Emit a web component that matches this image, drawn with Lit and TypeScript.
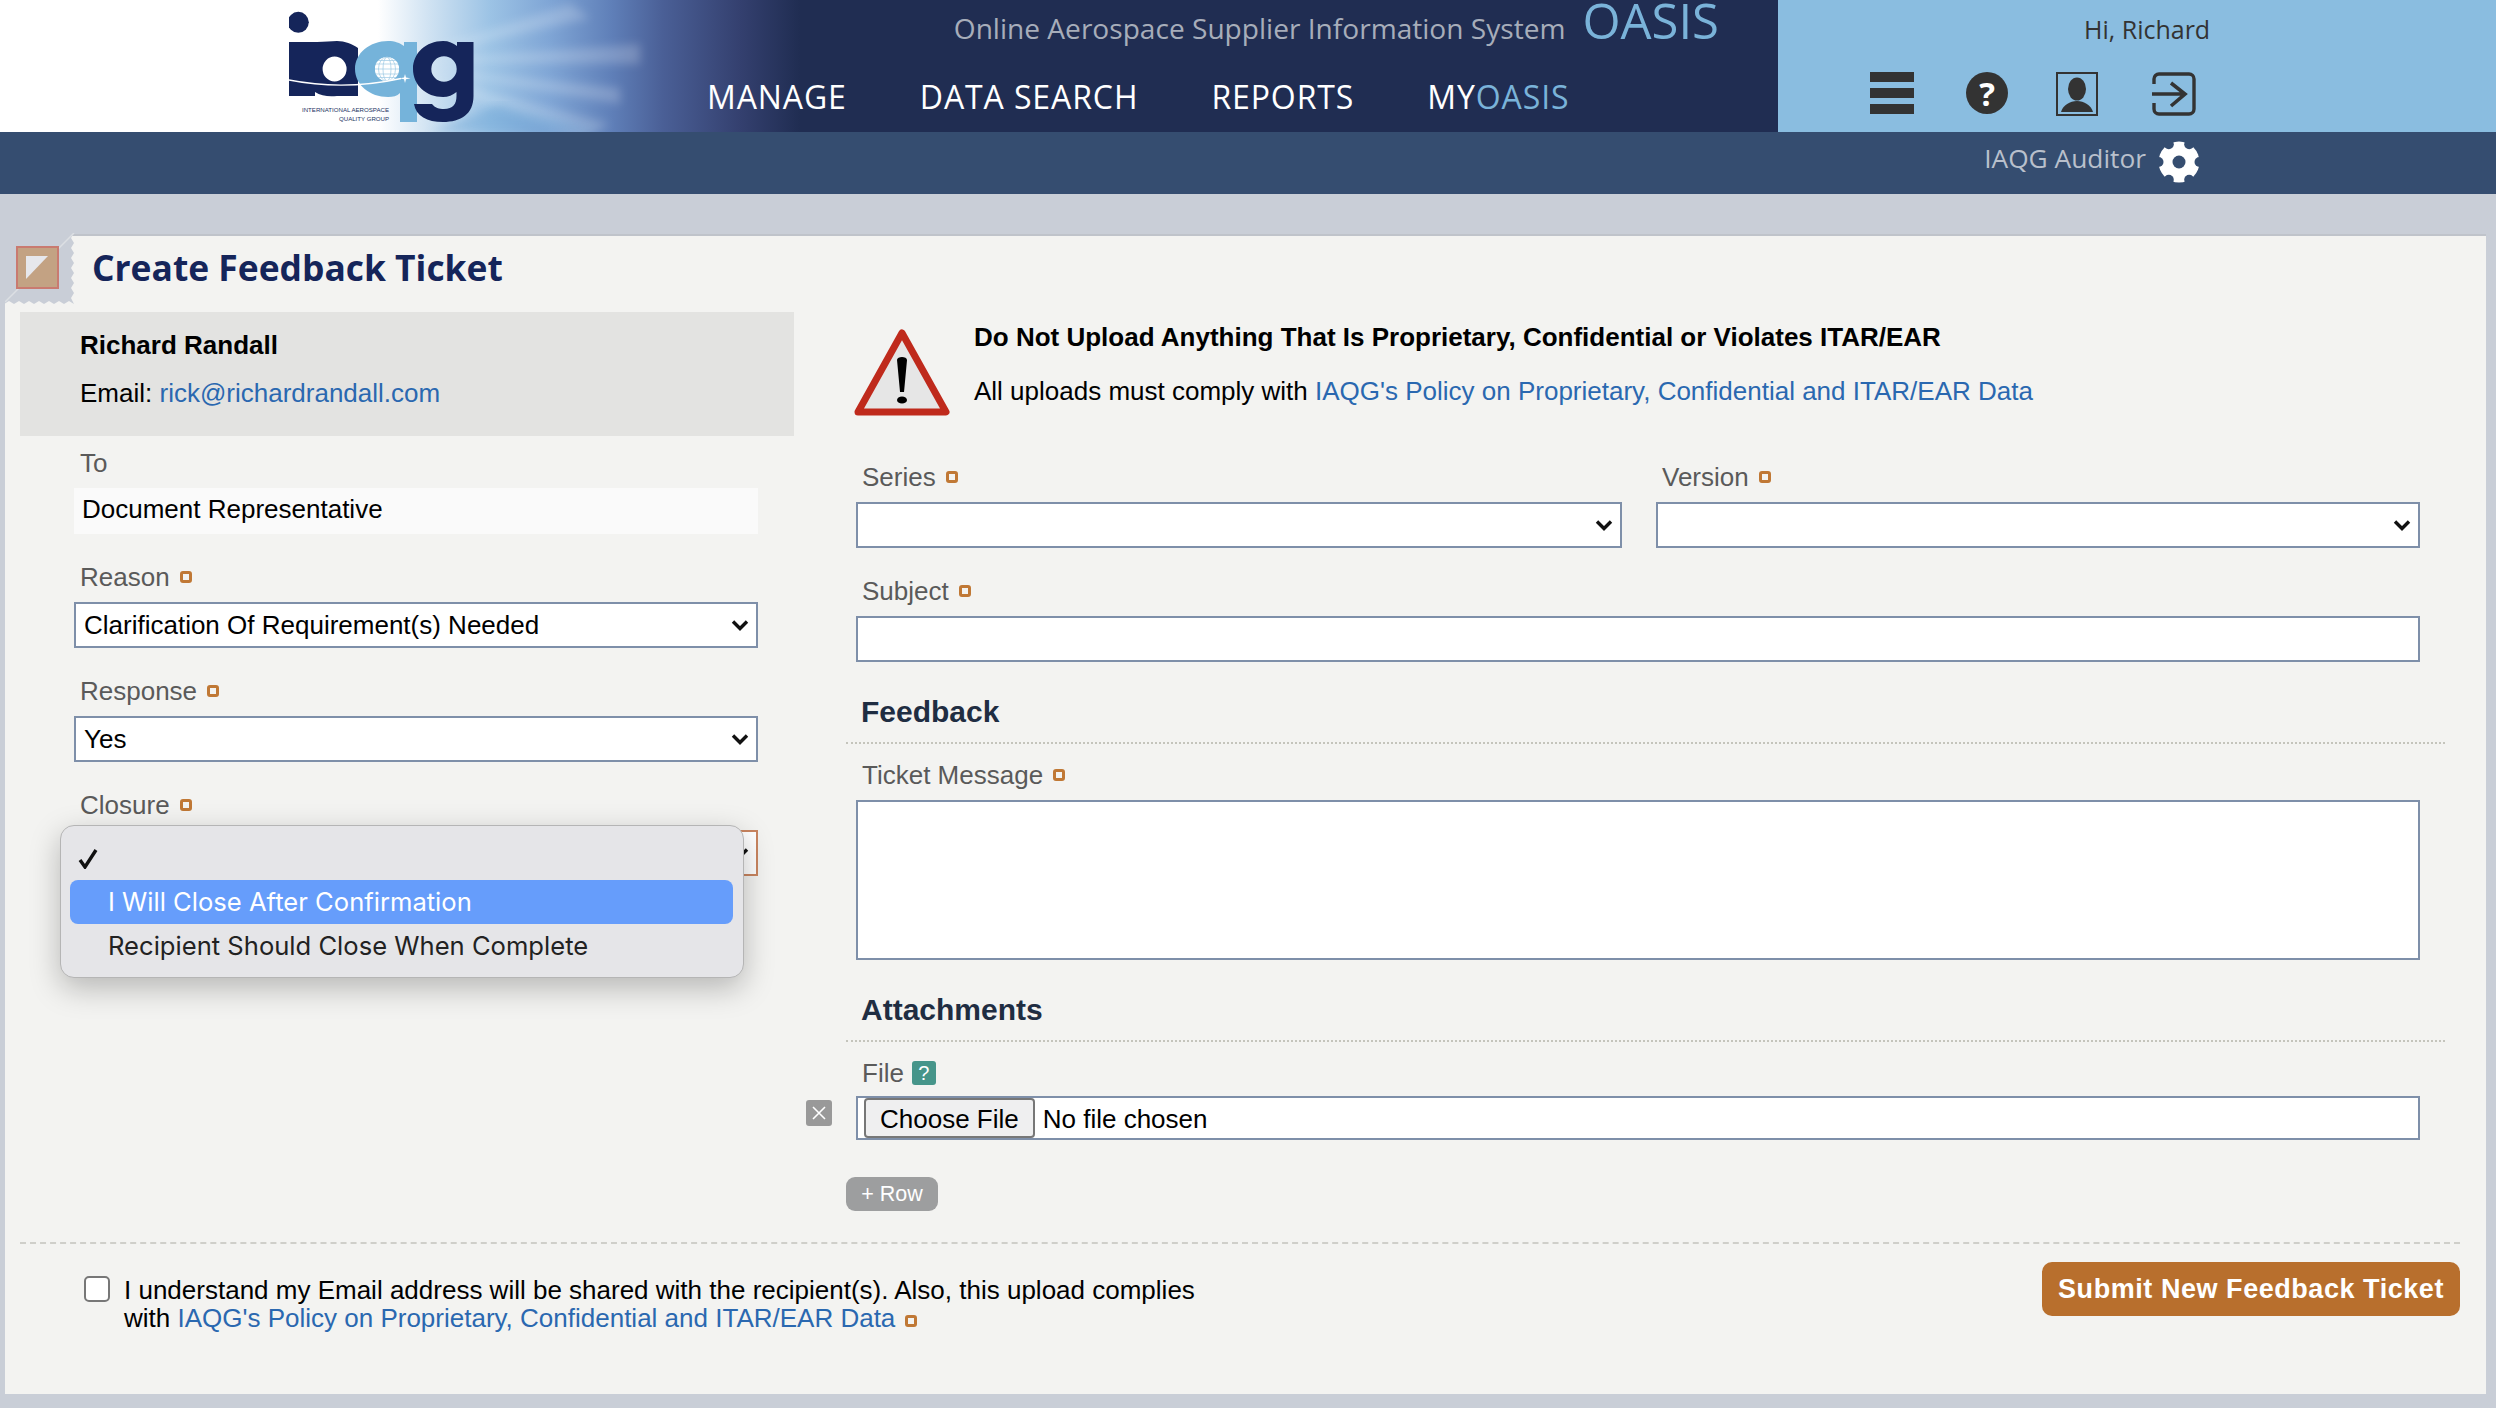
import { LitElement, html, css } from 'lit';
import { customElement } from 'lit/decorators.js';

const chevron = `url("data:image/svg+xml,%3Csvg xmlns='http://www.w3.org/2000/svg' width='18' height='12'%3E%3Cpath d='M2 2.5l7 7 7-7' fill='none' stroke='%23111' stroke-width='3.4'/%3E%3C/svg%3E")`;

const logo = html`
  <svg class="logo" viewBox="0 0 190 132" width="190" height="132">
    <circle cx="9.3" cy="22.3" r="10.5" fill="#15255a"></circle>
    <path fill="#15255a" fill-rule="evenodd" d="M0 42H28C36 42 42 41 48 41C56 41 63 44 69 48V96H48C40 97 32 96 26 92V96H0V84H0V42ZM45.6 56.5A12 12.5 0 1 0 45.6 81.5A12 12.5 0 1 0 45.6 56.5Z"></path>
    <path fill="#75b3da" fill-rule="evenodd" d="M99 41C106 41 111 43 115 46V42H128V122H111V93C108 96 104 97 99 97C81 97 66 85 66 69C66 53 81 41 99 41ZM98 57A12 12 0 1 0 98 81A12 12 0 1 0 98 57Z"></path>
    <circle cx="98" cy="69" r="12" fill="#fff"></circle>
    <g fill="none" stroke="#9cc8e4" stroke-width=".7">
      <ellipse cx="98" cy="69" rx="4" ry="12"></ellipse>
      <ellipse cx="98" cy="69" rx="8.5" ry="12"></ellipse>
      <path d="M86.5 64H109.5M86 69H110M86.5 74H109.5M89 60.5H107M89 77.5H107"></path>
    </g>
    <path fill="#15255a" fill-rule="evenodd" d="M154 41C160 41 164 43 168 46V42H184.5V96C184.5 114 172 122 154 122C138 122 127 116 125 104H143C146 108 150 109 155 109C164 109 167.5 104 167.5 96V92C164 95 159 97 154 97C137 97 124 85 124 69C124 53 137 41 154 41ZM155 56.3A12.7 12.7 0 1 0 155 81.7A12.7 12.7 0 1 0 155 56.3Z"></path>
    <path d="M0 80Q55 91 112 78.5" fill="none" stroke="#fff" stroke-width="1.4"></path>
    <path d="M116 74l1 3.4 4.5.8-4.5 1-1 3.8-1-3.8-4.5-1 4.5-.8z" fill="#fff"></path>
    <text class="cap" x="13" y="112" textLength="87" lengthAdjust="spacingAndGlyphs">INTERNATIONAL AEROSPACE</text>
    <text class="cap" x="50" y="121" textLength="50" lengthAdjust="spacingAndGlyphs">QUALITY GROUP</text>
  </svg>
`;

@customElement('app-root')
export class AppRoot extends LitElement {
  static styles = css`
    :host {
      display: block;
      min-height: 1408px;
      background: #c9ced7;
      font-family: 'Liberation Sans', Arial, sans-serif;
      font-size: 26px;
      color: #000;
    }

    * {
      box-sizing: border-box;
    }

    a {
      color: #2a68b0;
      text-decoration: none;
    }

    .header {
      display: flex;
      height: 132px;
      overflow: hidden;
    }

    .banner {
      position: relative;
      display: flex;
      width: 1778px;
      background: linear-gradient(90deg, #fff 0, #fff 378px, #cfe2f2 430px, #9cc3e5 490px, #7fa5d5 550px, #5f7fb8 612px, #4a5f96 663px, #34406f 740px, #202d52 800px);
    }

    .rays {
      position: absolute;
      left: 370px;
      top: 0;
    }

    .logo {
      position: relative;
      margin-left: 289px;
      flex: none;
    }

    .cap {
      font-size: 6px;
      fill: #23325f;
      font-family: 'Liberation Sans', sans-serif;
    }

    .titles {
      position: relative;
      width: 1013px;
      margin-left: 228px;
      font-family: 'Open Sans', sans-serif;
    }

    .tagline {
      display: flex;
      justify-content: flex-end;
      align-items: baseline;
      gap: 17px;
      height: 41px;
      padding-right: 1px;
      line-height: 41px;
      font-size: 28.1px;
      color: #a7adba;
      white-space: nowrap;
    }

    .oasis {
      font-size: 49px;
      color: #7ab3d9;
    }

    .nav {
      display: flex;
      gap: 73px;
      margin-top: 34px;
      font-size: 32px;
      letter-spacing: 0.9px;
      line-height: 44px;
      color: #fff;
      white-space: nowrap;
    }

    .nav span span {
      color: #7ab3d9;
    }

    .account {
      flex: 1;
      background: #8abde0;
      font-family: 'Open Sans', sans-serif;
      color: #333;
    }

    .hello {
      padding: 12px 0 0 306px;
      font-size: 25px;
      line-height: 34px;
    }

    .icons {
      display: flex;
      align-items: flex-start;
      margin: 26px 0 0 92px;
    }

    .burger {
      display: grid;
      gap: 6px;
      width: 44px;
    }

    .burger i {
      display: block;
      height: 10px;
      background: #333;
    }

    .help {
      display: flex;
      align-items: center;
      justify-content: center;
      width: 42px;
      height: 42px;
      margin-left: 52px;
      border-radius: 50%;
      background: #333;
      color: #fff;
      font-size: 33px;
      font-weight: 700;
    }

    .person {
      margin-left: 48px;
    }

    .exit {
      margin-left: 54px;
    }

    .subbar {
      display: flex;
      justify-content: flex-end;
      align-items: center;
      gap: 12px;
      height: 62px;
      padding: 0 296px 2px 0;
      background: #354d70;
      color: #b9c0cc;
      font-family: 'Open Sans', sans-serif;
      font-size: 26.3px;
    }

    .subbar span {
      margin-top: -8px;
    }

    .card {
      position: relative;
      margin: 40px 10px 0 5px;
      height: 1160px;
      padding: 0 26px 0 15px;
      background: #f3f3f1;
      border-top: 2px solid #bfc3ca;
    }

    .corner {
      position: absolute;
      left: 0;
      top: -3px;
    }

    .title {
      height: 76px;
      margin: 0;
      padding-left: 72px;
      font-family: 'Open Sans', sans-serif;
      font-size: 35.4px;
      font-weight: 700;
      line-height: 63px;
      color: #15255a;
    }

    .main {
      display: grid;
      grid-template-columns: 774px 1599px;
      gap: 52px;
    }

    .who {
      height: 124px;
      padding: 9px 0 0 60px;
      background: #e3e3e1;
      line-height: 48px;
    }

    .who b {
      display: block;
    }

    .left-form {
      padding: 12px 36px 0 54px;
    }

    .field {
      margin-bottom: 28px;
    }

    .label {
      display: flex;
      align-items: center;
      gap: 10px;
      height: 30px;
      margin-bottom: 10px;
      padding-left: 6px;
      color: #5a5a5a;
      line-height: 30px;
    }

    .req {
      display: inline-block;
      flex: none;
      width: 12px;
      height: 12px;
      border: 3px solid #c07835;
      border-radius: 3px;
    }

    .static {
      height: 46px;
      padding-left: 8px;
      background: #fafafa;
      line-height: 43px;
    }

    select,
    input[type='text'],
    textarea,
    input[type='file'] {
      display: block;
      width: 100%;
      height: 46px;
      margin: 0;
      border: 2px solid #7e8fa9;
      border-radius: 0;
      background-color: #fff;
      font: inherit;
      color: #000;
      outline: none;
    }

    select {
      appearance: none;
      padding: 0 30px 0 8px;
      background-repeat: no-repeat;
      background-position: right 7px center;
    }

    .closure {
      position: relative;
    }

    .closure select {
      border-color: #c98560;
    }

    .menu {
      position: absolute;
      left: -14px;
      top: -5px;
      width: 684px;
      height: 153px;
      padding: 10px 10px 10px 9px;
      border: 1px solid #b5b5b5;
      border-radius: 14px;
      background: #e5e5e8;
      box-shadow: 0 10px 30px rgba(0, 0, 0, 0.25);
      font-family: Inter, sans-serif;
      font-size: 25.6px;
      color: #222;
    }

    .item {
      position: relative;
      height: 44px;
      padding-left: 38px;
      line-height: 44px;
      border-radius: 8px;
    }

    .item.on {
      background: #669dfb;
      color: #fff;
    }

    .tick {
      position: absolute;
      left: 8px;
      top: 13px;
    }

    .right {
      padding-left: 10px;
    }

    .warning {
      display: flex;
      height: 150px;
      padding-top: 9px;
    }

    .warning svg {
      flex: none;
      margin: 8px 24px 0 -2px;
    }

    .warning b {
      display: block;
      line-height: 32px;
    }

    .warning p {
      margin: 21px 0 0;
      line-height: 34px;
    }

    .pair {
      display: grid;
      grid-template-columns: 766px 764px;
      gap: 34px;
      width: 1564px;
    }

    .right .field {
      width: 1564px;
      margin-bottom: 28px;
    }

    .right .pair .field {
      width: auto;
    }

    .section {
      margin: 0 0 16px -10px;
      padding: 4px 0 12px 15px;
      border-bottom: 2px dotted #c4c4bc;
      font-size: 30px;
      font-weight: 700;
      line-height: 36px;
      color: #1f2d42;
    }

    .message textarea {
      height: 160px;
      resize: none;
    }

    .file-row {
      position: relative;
      width: 1564px;
      margin-bottom: 37px;
    }

    .file-label {
      margin-bottom: 8px;
      gap: 8px;
    }

    .hint {
      display: flex;
      align-items: center;
      justify-content: center;
      width: 24px;
      height: 24px;
      border-radius: 3px;
      background: #46958a;
      color: #fff;
      font-size: 20px;
    }

    .remove {
      position: absolute;
      left: -50px;
      top: 42px;
      display: flex;
      align-items: center;
      justify-content: center;
      width: 26px;
      height: 26px;
      border-radius: 3px;
      background: #999;
    }

    input[type='file'] {
      height: 44px;
      padding: 0 0 0 6px;
      line-height: 38px;
    }

    input[type='file']::file-selector-button {
      height: 40px;
      margin: 0 8px 0 0;
      padding: 0 14px;
      border: 2px solid #777;
      border-radius: 4px;
      background: #efeff0;
      font: inherit;
      color: #000;
    }

    .add {
      display: block;
      width: 92px;
      height: 34px;
      margin-left: -10px;
      padding: 0;
      border: 0;
      border-radius: 9px;
      background: #9d9e9f;
      color: #fff;
      font: inherit;
      font-size: 21.5px;
    }

    .footer {
      display: flex;
      justify-content: space-between;
      align-items: flex-start;
      margin-top: 31px;
      padding-top: 18px;
      border-top: 2px dashed #cfcfca;
    }

    .agree {
      display: flex;
      margin: 14px 0 0 64px;
      width: 1120px;
      line-height: 28px;
    }

    .check {
      flex: none;
      width: 26px;
      height: 26px;
      margin-right: 14px;
      border: 2px solid #777;
      border-radius: 5px;
      background: #fff;
    }

    .agree .req {
      margin-left: 10px;
    }

    .submit {
      width: 418px;
      height: 54px;
      padding: 0;
      border: 0;
      border-radius: 10px;
      background: #b86f2d;
      color: #fff;
      font: inherit;
      font-size: 27px;
      font-weight: 700;
      letter-spacing: 0.55px;
    }
  `;

  renderLabel(text: string) {
    return html`<div class="label">${text}<span class="req"></span></div>`;
  }

  renderSelect(options: string[]) {
    return html`
      <select style="background-image:${chevron}">
        ${options.map((o) => html`<option>${o}</option>`)}
      </select>
    `;
  }

  render() {
    return html`
      <div class="header">
        <div class="banner">
          <svg class="rays" width="440" height="132" viewBox="0 0 440 132">
            <defs>
              <filter id="soft"><feGaussianBlur stdDeviation="5"></feGaussianBlur></filter>
            </defs>
            <g fill="#fff" opacity=".2" filter="url(#soft)">
              <path d="M30 62L270 44L270 64Z"></path>
              <path d="M30 70L240 124L210 140Z"></path>
              <path d="M30 66L250 88L250 104Z"></path>
              <path d="M30 60L200 4L220 18Z"></path>
            </g>
            <path d="M60 132L130 104L230 132Z" fill="#5f9dd2" opacity=".35" filter="url(#soft)"></path>
          </svg>
          ${logo}
          <div class="titles">
            <div class="tagline">
              <span>Online Aerospace Supplier Information System</span>
              <span class="oasis">OASIS</span>
            </div>
            <div class="nav">
              <span>MANAGE</span>
              <span>DATA SEARCH</span>
              <span>REPORTS</span>
              <span>MY<span>OASIS</span></span>
            </div>
          </div>
        </div>
        <div class="account">
          <div class="hello">Hi, Richard</div>
          <div class="icons">
            <div class="burger"><i></i><i></i><i></i></div>
            <div class="help">?</div>
            <svg class="person" width="42" height="44" viewBox="0 0 42 44">
              <rect x="1" y="1" width="40" height="42" fill="none" stroke="#333" stroke-width="2"></rect>
              <ellipse cx="21" cy="17" rx="9" ry="11.5" fill="#333"></ellipse>
              <path d="M5 40C7 33 14 29 21 29C28 29 35 33 37 40Z" fill="#333"></path>
            </svg>
            <svg class="exit" width="44" height="44" viewBox="0 0 44 44" fill="none" stroke="#333">
              <path d="M2 12V7A5 5 0 0 1 7 2H37A5 5 0 0 1 42 7V37A5 5 0 0 1 37 42H7A5 5 0 0 1 2 37V31" stroke-width="3.4"></path>
              <path d="M0 22H32M19 11L33 22L19 34" stroke-width="3.6"></path>
            </svg>
          </div>
        </div>
      </div>
      <div class="subbar">
        <span>IAQG Auditor</span>
        <svg width="42" height="42" viewBox="-21 -21 42 42">
          <circle r="20.5" fill="#fff"></circle>
          <g fill="#354d70">
            <circle r="6.5"></circle>
            <circle cx="20.5" r="5"></circle>
            <circle cx="-20.5" r="5"></circle>
            <circle cx="10.2" cy="17.7" r="5"></circle>
            <circle cx="-10.2" cy="17.7" r="5"></circle>
            <circle cx="10.2" cy="-17.7" r="5"></circle>
            <circle cx="-10.2" cy="-17.7" r="5"></circle>
          </g>
        </svg>
      </div>

      <div class="card">
        <svg class="corner" width="72" height="74" viewBox="0 0 72 74">
          <path d="M-1 0H69L66 5L69 10L66 15L69 20L66 25L69 30L66 35L69 40L66 45L69 50L66 55L69 60L66 65L69 71L64 68L59 71L54 68L49 71L44 68L39 71L34 68L29 71L24 68L19 71L14 68L9 71L4 68L-1 71Z" fill="#c9ced7"></path>
          <path d="M69 0L0 69" stroke="#dcdfe3" stroke-width="1.5"></path>
          <rect x="12" y="14" width="41" height="41" fill="#c3a283" stroke="#c97a70" stroke-width="2"></rect>
          <path d="M21 23H43L21 46Z" fill="#e6e7ec"></path>
        </svg>
        <h1 class="title">Create Feedback Ticket</h1>

        <div class="main">
          <div>
            <div class="who">
              <b>Richard Randall</b>
              Email: <a>rick@richardrandall.com</a>
            </div>
            <div class="left-form">
              <div class="field">
                <div class="label">To</div>
                <div class="static">Document Representative</div>
              </div>
              <div class="field">
                ${this.renderLabel('Reason')}
                ${this.renderSelect(['Clarification Of Requirement(s) Needed'])}
              </div>
              <div class="field">
                ${this.renderLabel('Response')}
                ${this.renderSelect(['Yes'])}
              </div>
              <div class="field">
                ${this.renderLabel('Closure')}
                <div class="closure">
                  ${this.renderSelect([''])}
                  <div class="menu">
                    <div class="item">
                      <svg class="tick" width="20" height="20" viewBox="0 0 20 20">
                        <path d="M2 11L7 18L18 1" fill="none" stroke="#111" stroke-width="3.4"></path>
                      </svg>
                    </div>
                    <div class="item on">I Will Close After Confirmation</div>
                    <div class="item">Recipient Should Close When Complete</div>
                  </div>
                </div>
              </div>
            </div>
          </div>

          <div class="right">
            <div class="warning">
              <svg width="96" height="88" viewBox="0 0 96 88">
                <path d="M48 4L92 83H4Z" fill="#e6e6e6" stroke="#bf2a1c" stroke-width="7" stroke-linejoin="round"></path>
                <path d="M43 31C43 27 53 27 53 31L50 63H46Z" fill="#000"></path>
                <ellipse cx="48" cy="71" rx="5" ry="3.6" fill="#000"></ellipse>
              </svg>
              <div>
                <b>Do Not Upload Anything That Is Proprietary, Confidential or Violates ITAR/EAR</b>
                <p>All uploads must comply with <a>IAQG's Policy on Proprietary, Confidential and ITAR/EAR Data</a></p>
              </div>
            </div>
            <div class="pair">
              <div class="field">
                ${this.renderLabel('Series')}
                ${this.renderSelect([''])}
              </div>
              <div class="field">
                ${this.renderLabel('Version')}
                ${this.renderSelect([''])}
              </div>
            </div>
            <div class="field">
              ${this.renderLabel('Subject')}
              <input type="text" />
            </div>
            <div class="section">Feedback</div>
            <div class="field message">
              ${this.renderLabel('Ticket Message')}
              <textarea></textarea>
            </div>
            <div class="section">Attachments</div>
            <div class="file-row">
              <div class="label file-label">File<span class="hint">?</span></div>
              <span class="remove">
                <svg width="16" height="16" viewBox="0 0 16 16">
                  <path d="M2 2L14 14M14 2L2 14" stroke="#fff" stroke-width="1.6"></path>
                </svg>
              </span>
              <input type="file" />
            </div>
            <button class="add">+ Row</button>
          </div>
        </div>

        <div class="footer">
          <div class="agree">
            <span class="check"></span>
            <span>
              I understand my Email address will be shared with the recipient(s). Also, this upload complies with
              <a>IAQG's Policy on Proprietary, Confidential and ITAR/EAR Data</a><span class="req"></span>
            </span>
          </div>
          <button class="submit">Submit New Feedback Ticket</button>
        </div>
      </div>
    `;
  }
}
